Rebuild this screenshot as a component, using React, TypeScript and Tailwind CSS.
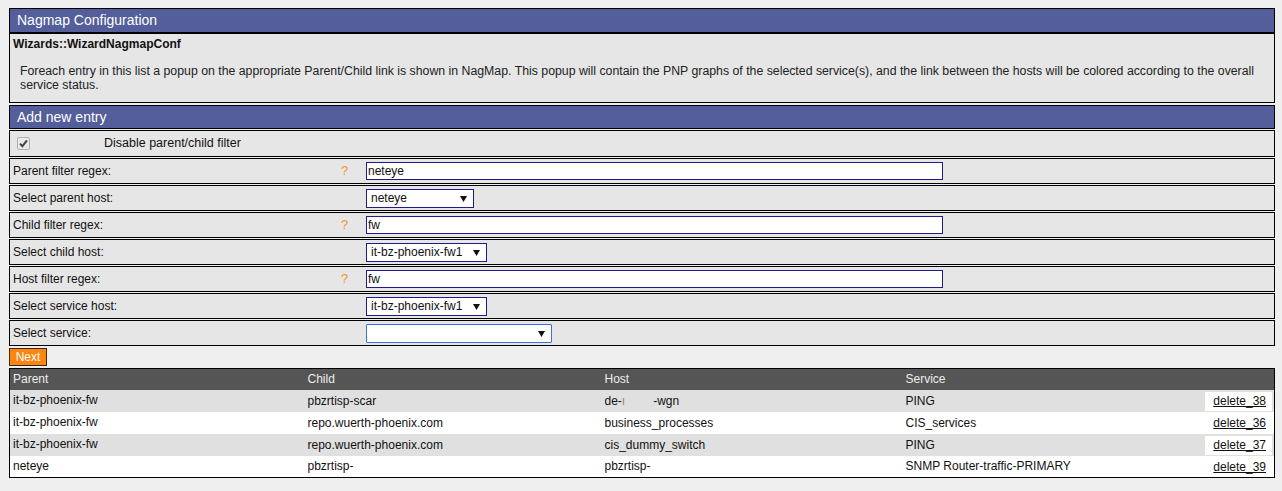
import React from "react";

const Tri = () => (
  <svg width="7" height="7" viewBox="0 0 7 7" className="shrink-0">
    <path d="M0 1 L7 1 L3.5 7 Z" fill="#111" />
  </svg>
);

type Row =
  | { label: string; kind: "input"; value: string }
  | { label: string; kind: "select"; value: string; w: string; blue?: boolean };

const rows: Row[] = [
  { label: "Parent filter regex:", kind: "input", value: "neteye" },
  { label: "Select parent host:", kind: "select", value: "neteye", w: "w-[108px]" },
  { label: "Child filter regex:", kind: "input", value: "fw" },
  { label: "Select child host:", kind: "select", value: "it-bz-phoenix-fw1", w: "w-[121px]" },
  { label: "Host filter regex:", kind: "input", value: "fw" },
  { label: "Select service host:", kind: "select", value: "it-bz-phoenix-fw1", w: "w-[121px]" },
  { label: "Select service:", kind: "select", value: "", w: "w-[186px]", blue: true },
];

const tableRows = [
  { p: "it-bz-phoenix-fw", c: "pbzrtisp-scar", h: "wgn", s: "PING", d: "delete_38" },
  { p: "it-bz-phoenix-fw", c: "repo.wuerth-phoenix.com", h: "business_processes", s: "CIS_services", d: "delete_36" },
  { p: "it-bz-phoenix-fw", c: "repo.wuerth-phoenix.com", h: "cis_dummy_switch", s: "PING", d: "delete_37" },
  { p: "neteye", c: "pbzrtisp-", h: "pbzrtisp-", s: "SNMP Router-traffic-PRIMARY", d: "delete_39" },
];

export default function App() {
  return (
    <div className="min-h-[491px] bg-[#efefef] pt-[8px] pl-[9px] font-['Liberation_Sans',Arial,sans-serif] text-[12px] text-[#111]">
      <div className="w-[1266px] flex flex-col">
        <div className="h-[25px] border border-black bg-[#535e9a] text-white text-[14px] pl-[7px] flex items-center">
          Nagmap Configuration
        </div>
        <div className="h-[70px] border border-black bg-[#e6e6e6] pl-[3px] pt-[3px] text-[#111]">
          <div className="font-bold text-[12px] leading-[14px]">Wizards::WizardNagmapConf</div>
          <p className="mt-[13px] pl-[7px] text-[12.3px] leading-[14px] text-[#222]">
            Foreach entry in this list a popup on the appropriate Parent/Child link is shown in NagMap. This popup will contain the PNP graphs of the selected service(s), and the link between the hosts will be colored according to the overall service status.
          </p>
        </div>
        <div className="mt-[2px] h-[24px] border border-black bg-[#535e9a] text-white text-[14px] pl-[7px] flex items-center">
          Add new entry
        </div>
        <div className="mt-[1px] h-[27px] border border-black bg-[#e6e6e6] flex items-center">
          <div className="ml-[7px] w-[13px] h-[13px] rounded-[2px] border border-[#b0b0b0] bg-[#e9e9e9] flex items-center justify-center">
            <svg width="9" height="9" viewBox="0 0 9 9">
              <path d="M1 4.6 L3.4 7.2 L8 1.4" stroke="#444" strokeWidth="2" fill="none" />
            </svg>
          </div>
          <div className="ml-[74px] text-[12.5px]">Disable parent/child filter</div>
        </div>
        {rows.map((r, i) => (
          <div key={i} className="mt-[1px] h-[26px] border border-black bg-[#e6e6e6] flex items-center">
            <div className="w-[328px] pl-[3px]">{r.label}</div>
            <div className="w-[28px] pl-[3px] text-[#f7941d] text-[13px] self-start pt-[2px]">
              {r.kind === "input" ? "?" : ""}
            </div>
            {r.kind === "input" ? (
              <div className="w-[577px] h-[18px] border border-[#1c1c8c] bg-white pl-[1px] flex items-center leading-none">
                {r.value}
              </div>
            ) : (
              <div
                className={`${r.w} h-[19px] border bg-white pl-[4px] pr-[6px] flex items-center justify-between leading-none ${
                  r.blue ? "border-[#3d6fe0] rounded-[1px]" : "border-[#1c1c8c]"
                }`}
              >
                <span>{r.value}</span>
                <Tri />
              </div>
            )}
          </div>
        ))}
        <div className="mt-[2px] w-[38px] h-[18px] border border-[#3a2a10] bg-[#ff8410] text-white text-[12px] flex items-center justify-center">
          Next
        </div>
        <table className="mt-[2px] w-[1266px] table-fixed border-collapse border border-black bg-white text-[12px]">
          <colgroup>
            <col className="w-[295px]" />
            <col className="w-[297px]" />
            <col className="w-[301px]" />
            <col className="w-[300px]" />
            <col />
          </colgroup>
          <thead>
            <tr className="h-[21px] bg-[#555555] text-[#ececec] text-left">
              <th className="font-normal pl-[3px]">Parent</th>
              <th className="font-normal pl-[3px]">Child</th>
              <th className="font-normal pl-[3px]">Host</th>
              <th className="font-normal pl-[3px]">Service</th>
              <th></th>
            </tr>
          </thead>
          <tbody>
            {tableRows.map((t, i) => (
              <tr key={i} className={`h-[22px] ${i % 2 === 0 ? "bg-[#e0e0e0]" : "bg-white"}`}>
                <td className="pl-[3px] align-top pt-[1px]">{t.p}</td>
                <td className="pl-[3px]">{t.c}</td>
                <td className="pl-[3px]">
                  {i === 0 ? (
                    <span>
                      de-<span className="text-[#888]">ı</span>
                      <span className="ml-[28px]">-wgn</span>
                    </span>
                  ) : (
                    t.h
                  )}
                </td>
                <td className="pl-[3px]">{t.s}</td>
                <td className="p-0">
                  <div className="mx-[2px] mt-[1px] h-[19px] bg-white flex items-center justify-end pr-[6px]">
                    <span className="underline">{t.d}</span>
                  </div>
                </td>
              </tr>
            ))}
          </tbody>
        </table>
      </div>
    </div>
  );
}
